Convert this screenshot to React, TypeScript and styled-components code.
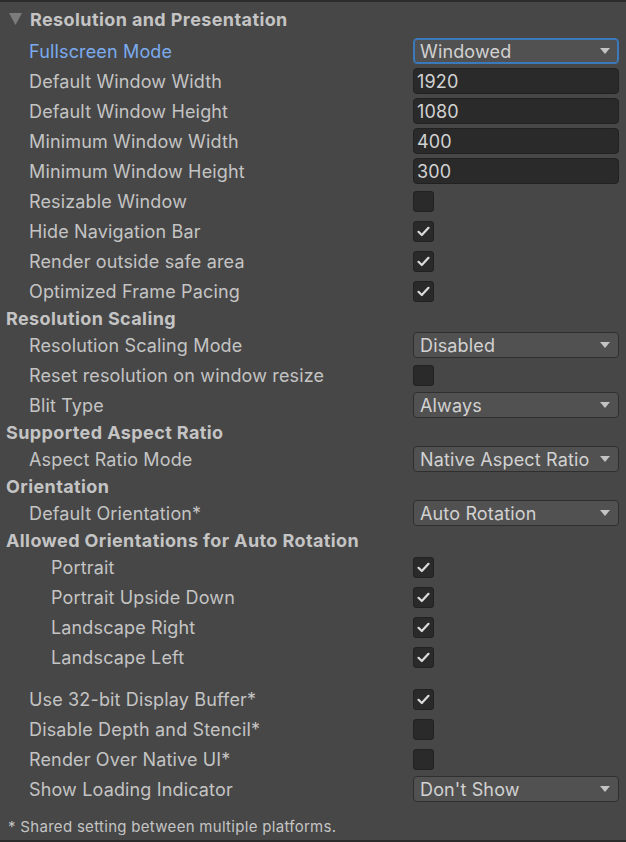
import React from "react";
import styled, { createGlobalStyle } from "styled-components";

const Global = createGlobalStyle`
  html, body { margin: 0; padding: 0; background: #474747; }
  body { font-family: Inter, "Noto Sans", sans-serif; }
`;

const Panel = styled.div`
  width: 626px;
  height: 842px;
  box-sizing: border-box;
  background: #474747;
  border-top: 2px solid #2b2b2b;
  border-bottom: 2px solid #2b2b2b;
  display: flex;
  flex-direction: column;
  color: #c4c4c4;
  overflow: hidden;
`;

const Foldout = styled.div`
  height: 34px;
  display: flex;
  align-items: center;
  gap: 8px;
  padding-left: 9px;
  font-size: 18px;
  font-weight: 700;
  letter-spacing: 0.4px;
  color: #c4c4c4;
`;

const Arrow = styled.svg`
  width: 13px;
  height: 12px;
  flex: none;
`;

const Header = styled.div`
  height: 24px;
  display: flex;
  align-items: center;
  padding-left: 6px;
  font-size: 18px;
  font-weight: 700;
  letter-spacing: 0.4px;
  color: #c4c4c4;
`;

const Row = styled.div`
  height: 30px;
  display: flex;
  align-items: center;
  padding-right: 7px;
`;

const Label = styled.div<{ $indent: number; $active?: boolean }>`
  flex: 1;
  padding-left: ${(p) => p.$indent}px;
  font-size: 18px;
  letter-spacing: 0.15px;
  color: ${(p) => (p.$active ? "#7babee" : "#c4c4c4")};
  white-space: nowrap;
`;

const Control = styled.div`
  width: 206px;
  display: flex;
  align-items: center;
`;

const Dropdown = styled.div<{ $focus?: boolean }>`
  width: 100%;
  height: 26px;
  box-sizing: border-box;
  display: flex;
  align-items: center;
  justify-content: space-between;
  padding: 0 8px 0 6px;
  background: #515151;
  border: 1px solid ${(p) => (p.$focus ? "#3a79bb" : "#2f2f2f")};
  box-shadow: ${(p) => (p.$focus ? "0 0 0 1px #3a79bb inset" : "none")};
  border-radius: 4px;
  font-size: 18px;
  letter-spacing: 0.15px;
  color: #d2d2d2;
  white-space: nowrap;
`;

const Caret = styled.svg`
  width: 10px;
  height: 6px;
  flex: none;
`;

const Field = styled.div`
  width: 100%;
  height: 26px;
  box-sizing: border-box;
  display: flex;
  align-items: center;
  padding-left: 3px;
  background: #2a2a2a;
  border: 1px solid #212121;
  border-radius: 4px;
  font-size: 18px;
  letter-spacing: 0.15px;
  color: #d2d2d2;
`;

const Box = styled.div`
  width: 21px;
  height: 21px;
  box-sizing: border-box;
  background: #2a2a2a;
  border: 1px solid #212121;
  border-radius: 3px;
  display: flex;
  align-items: center;
  justify-content: center;
`;

const Spacer = styled.div<{ $h: number }>`
  height: ${(p) => p.$h}px;
  flex: none;
`;

const Note = styled.div`
  padding-left: 8px;
  font-size: 15px;
  letter-spacing: 0.3px;
  color: #c4c4c4;
  height: 24px;
  display: flex;
  align-items: center;
`;

type Ctl =
  | { kind: "drop"; value: string; focus?: boolean }
  | { kind: "field"; value: string }
  | { kind: "check"; checked: boolean };

const Check = ({ checked }: { checked: boolean }) => (
  <Box>
    {checked && (
      <svg width="13" height="11" viewBox="0 0 13 11">
        <path d="M1.5 5.8 L4.8 9 L11.5 1.8" fill="none" stroke="#dcdcdc" strokeWidth="2.2" strokeLinecap="round" strokeLinejoin="round" />
      </svg>
    )}
  </Box>
);

const renderCtl = (c: Ctl) => {
  if (c.kind === "drop")
    return (
      <Dropdown $focus={c.focus}>
        <span>{c.value}</span>
        <Caret viewBox="0 0 10 6">
          <path d="M0 0 H10 L5 6 Z" fill="#c4c4c4" />
        </Caret>
      </Dropdown>
    );
  if (c.kind === "field") return <Field>{c.value}</Field>;
  return <Check checked={c.checked} />;
};

const Setting = ({ label, ctl, indent = 29, active }: { label: string; ctl: Ctl; indent?: number; active?: boolean }) => (
  <Row>
    <Label $indent={indent} $active={active}>{label}</Label>
    <Control>{renderCtl(ctl)}</Control>
  </Row>
);

export default function App() {
  return (
    <>
      <Global />
      <Panel>
        <Foldout>
          <Arrow viewBox="0 0 13 12">
            <path d="M0 0 H13 L6.5 12 Z" fill="#7c7c7c" />
          </Arrow>
          Resolution and Presentation
        </Foldout>
        <Setting label="Fullscreen Mode" active ctl={{ kind: "drop", value: "Windowed", focus: true }} />
        <Setting label="Default Window Width" ctl={{ kind: "field", value: "1920" }} />
        <Setting label="Default Window Height" ctl={{ kind: "field", value: "1080" }} />
        <Setting label="Minimum Window Width" ctl={{ kind: "field", value: "400" }} />
        <Setting label="Minimum Window Height" ctl={{ kind: "field", value: "300" }} />
        <Setting label="Resizable Window" ctl={{ kind: "check", checked: false }} />
        <Setting label="Hide Navigation Bar" ctl={{ kind: "check", checked: true }} />
        <Setting label="Render outside safe area" ctl={{ kind: "check", checked: true }} />
        <Setting label="Optimized Frame Pacing" ctl={{ kind: "check", checked: true }} />
        <Header>Resolution Scaling</Header>
        <Setting label="Resolution Scaling Mode" ctl={{ kind: "drop", value: "Disabled" }} />
        <Setting label="Reset resolution on window resize" ctl={{ kind: "check", checked: false }} />
        <Setting label="Blit Type" ctl={{ kind: "drop", value: "Always" }} />
        <Header>Supported Aspect Ratio</Header>
        <Setting label="Aspect Ratio Mode" ctl={{ kind: "drop", value: "Native Aspect Ratio" }} />
        <Header>Orientation</Header>
        <Setting label="Default Orientation*" ctl={{ kind: "drop", value: "Auto Rotation" }} />
        <Header>Allowed Orientations for Auto Rotation</Header>
        <Setting label="Portrait" indent={51} ctl={{ kind: "check", checked: true }} />
        <Setting label="Portrait Upside Down" indent={51} ctl={{ kind: "check", checked: true }} />
        <Setting label="Landscape Right" indent={51} ctl={{ kind: "check", checked: true }} />
        <Setting label="Landscape Left" indent={51} ctl={{ kind: "check", checked: true }} />
        <Spacer $h={12} />
        <Setting label="Use 32-bit Display Buffer*" ctl={{ kind: "check", checked: true }} />
        <Setting label="Disable Depth and Stencil*" ctl={{ kind: "check", checked: false }} />
        <Setting label="Render Over Native UI*" ctl={{ kind: "check", checked: false }} />
        <Setting label="Show Loading Indicator" ctl={{ kind: "drop", value: "Don't Show" }} />
        <Spacer $h={10} />
        <Note>* Shared setting between multiple platforms.</Note>
      </Panel>
    </>
  );
}
